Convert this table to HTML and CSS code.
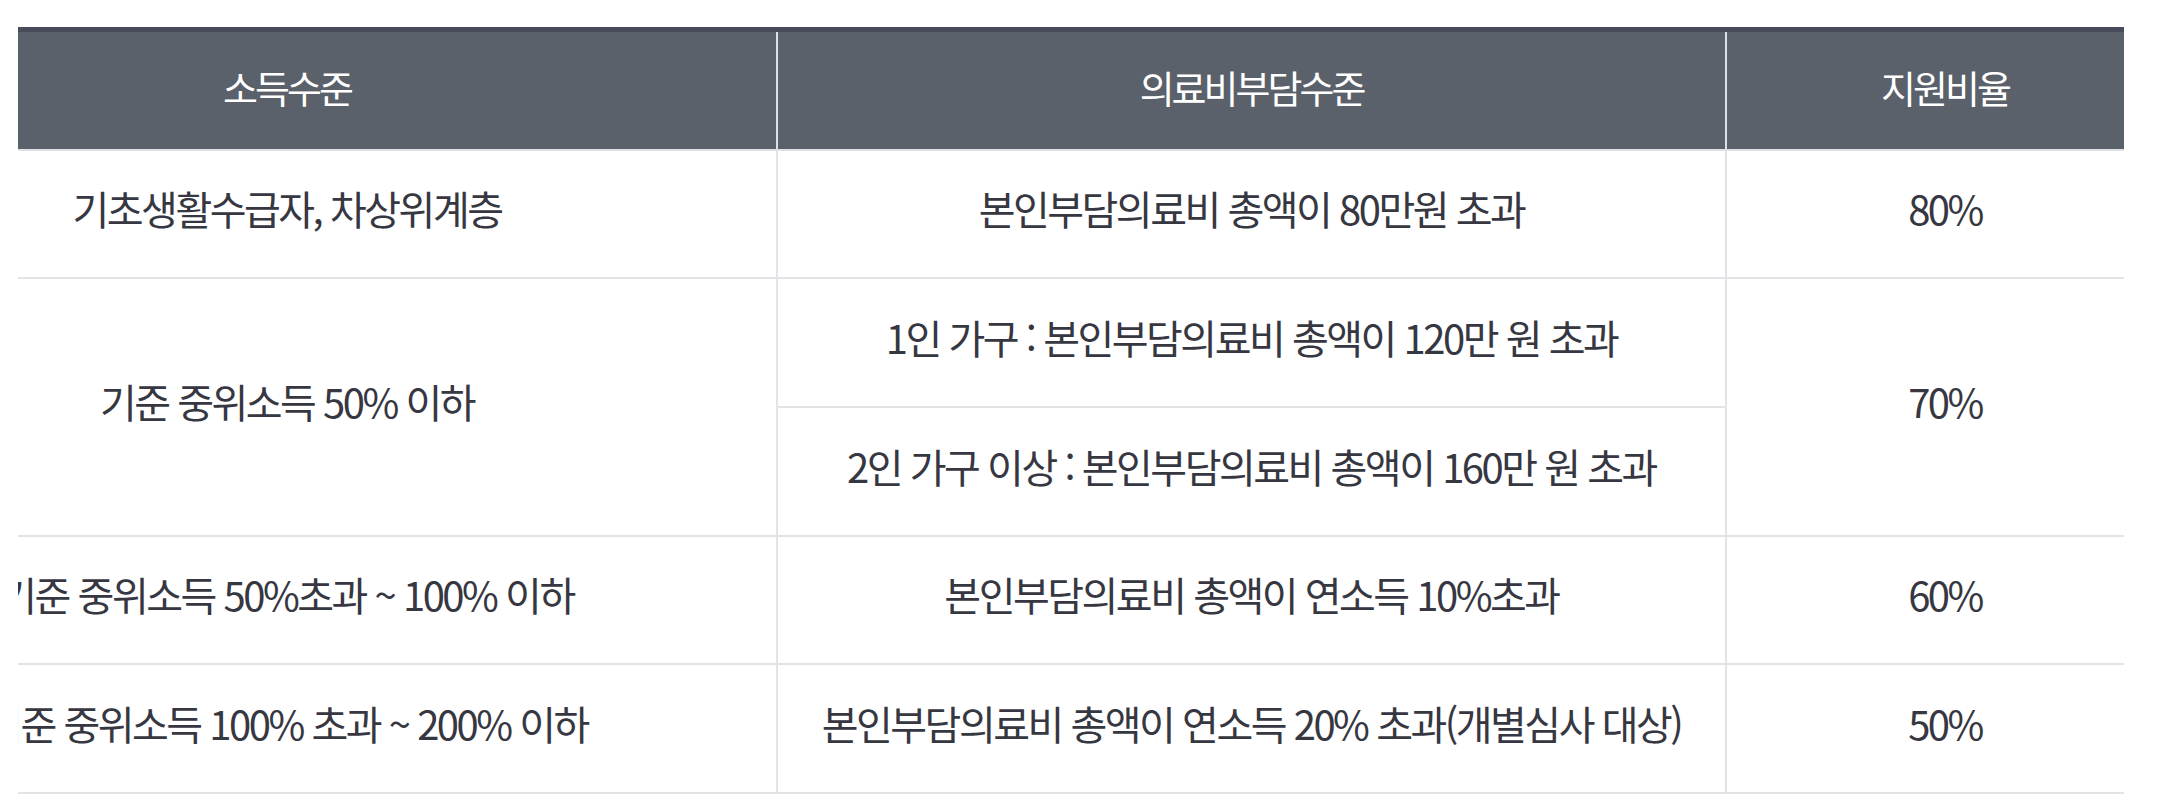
FILE: index.html
```html
<!DOCTYPE html>
<html lang="ko">
<head>
<meta charset="utf-8">
<title>의료비 지원비율</title>
<link rel="stylesheet" href="styles.css">
</head>
<body>
<div class="wrap">
  <table class="support">
    <colgroup>
      <col class="c-income">
      <col class="c-cost">
      <col class="c-rate">
    </colgroup>
    <thead>
      <tr>
        <th>소득수준</th>
        <th>의료비부담수준</th>
        <th class="rate">지원비율</th>
      </tr>
    </thead>
    <tbody>
      <tr class="r128">
        <td>기초생활수급자, 차상위계층</td>
        <td>본인부담의료비 총액이 80만원 초과</td>
        <td class="rate">80%</td>
      </tr>
      <tr class="r129">
        <td rowspan="2">기준 중위소득 50% 이하</td>
        <td>1인 가구 : 본인부담의료비 총액이 120만 원 초과</td>
        <td class="rate" rowspan="2">70%</td>
      </tr>
      <tr class="r129">
        <td>2인 가구 이상 : 본인부담의료비 총액이 160만 원 초과</td>
      </tr>
      <tr class="r128">
        <td>기준 중위소득 50%초과 ~ 100% 이하</td>
        <td>본인부담의료비 총액이 연소득 10%초과</td>
        <td class="rate">60%</td>
      </tr>
      <tr class="r129">
        <td>기준 중위소득 100% 초과 ~ 200% 이하</td>
        <td>본인부담의료비 총액이 연소득 20% 초과(개별심사 대상)</td>
        <td class="rate">50%</td>
      </tr>
    </tbody>
  </table>
</div>
</body>
</html>
```

FILE: styles.css
```css
html, body {
  margin: 0;
  padding: 0;
  background: #ffffff;
}

body {
  font-family: "Noto Sans CJK KR", "Noto Sans", sans-serif;
  color: #363741;
}

.wrap {
  margin: 27px 0 0 18px;
  width: 2106px;
  overflow: hidden;
}

.support {
  width: 2365px;
  margin-left: -220px;
  border-collapse: separate;
  border-spacing: 0;
  table-layout: fixed;
  border-top: 5px solid #474b5a;
}

.c-income { width: 980px; }
.c-cost { width: 949px; }
.c-rate { width: 436px; }

.support th {
  height: 119px;
  padding: 0 0 8px;
  box-sizing: border-box;
  background: #5b616b;
  color: #ffffff;
  font-weight: 400;
  font-size: 38px;
  letter-spacing: -3px;
  text-align: center;
  vertical-align: middle;
  border-bottom: 2px solid #dfe2e6;
  border-right: 2px solid #dcdfe3;
  line-height: 1;
}

.support td {
  padding: 0 0 12px;
  font-size: 40px;
  letter-spacing: -2.5px;
  line-height: 1;
  text-align: center;
  vertical-align: middle;
  white-space: nowrap;
  border-bottom: 2px solid #e2e4e7;
  border-right: 2px solid #e2e4e7;
  box-sizing: border-box;
}

.support .rate {
  border-right: 0;
}

.r128 { height: 128px; }
.r129 { height: 129px; }
```
